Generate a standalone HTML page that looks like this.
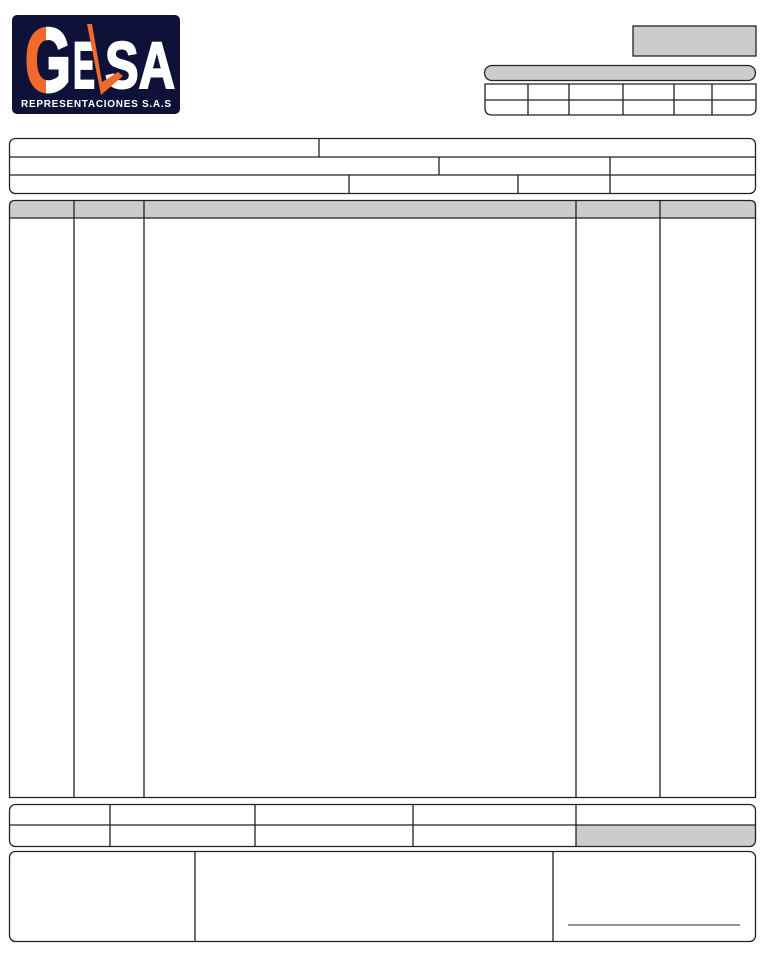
<!DOCTYPE html>
<html><head><meta charset="utf-8"><style>
html,body{margin:0;padding:0;background:#fff;}
svg{display:block;}
</style></head><body>
<svg width="770" height="970" viewBox="0 0 770 970" xmlns="http://www.w3.org/2000/svg">
<defs>
<clipPath id="gl"><rect x="20" y="20" width="26" height="80"/></clipPath>
<clipPath id="gr"><rect x="46" y="20" width="40" height="80"/></clipPath>
</defs>
<!-- logo -->
<rect x="12" y="15" width="168" height="99" rx="5" fill="#0f1238"/>
<g font-family="Liberation Sans, sans-serif" font-weight="bold">
<text x="25" y="91" font-size="90" textLength="46" lengthAdjust="spacingAndGlyphs" fill="#ef6a2c" stroke="#ef6a2c" stroke-width="3" clip-path="url(#gl)">G</text>
<text x="25" y="91" font-size="90" textLength="46" lengthAdjust="spacingAndGlyphs" fill="#fff" stroke="#fff" stroke-width="3" clip-path="url(#gr)">G</text>
<text x="73" y="88" font-size="66" textLength="22" lengthAdjust="spacingAndGlyphs" fill="#fff" stroke="#fff" stroke-width="2">E</text>
<text x="105" y="88" font-size="66" textLength="70" lengthAdjust="spacingAndGlyphs" fill="#fff" stroke="#fff" stroke-width="2">SA</text>
<path d="M87 24 L92 24 L102 82 L118 72 L123 76 L101 95 Z" fill="#ef6a2c"/>
<text x="21" y="107" font-size="10" textLength="150" lengthAdjust="spacing" fill="#fff">REPRESENTACIONES S.A.S</text>
</g>
<g fill="none" stroke="#222" stroke-width="1.3">
<!-- top right -->
<rect x="633" y="26" width="123" height="30" fill="#cccccc"/>
<rect x="484.5" y="65.5" width="271" height="15" rx="7.5" fill="#cccccc"/>
<path d="M485 84 H756 V108 Q756 115 749 115 H492 Q485 115 485 108 Z"/>
<path d="M485 100 H756 M528 84 V115 M569 84 V115 M623 84 V115 M674 84 V115 M712 84 V115"/>
<!-- form -->
<rect x="9.5" y="138.5" width="746" height="55" rx="6"/>
<path d="M10 157 H756 M10 175 H756 M319 138 V157 M439 157 V175 M610 157 V193 M349 175 V193 M518 175 V193"/>
<!-- items -->
<path d="M9.5 218 V797.5 H755.5 V218" />
<path d="M9.5 218 V206 Q9.5 200.5 15 200.5 H750 Q755.5 200.5 755.5 206 V218 Z" fill="#cccccc"/>
<path d="M74 200 V797 M144 200 V797 M576 200 V797 M660 200 V797"/>
<!-- totals -->
<path d="M576 825 H755.5 V839 Q755.5 846 749 846 H576 Z" fill="#cccccc" stroke="none"/>
<rect x="9.5" y="804.5" width="746" height="42" rx="6"/>
<path d="M10 825 H756 M110 804 V846 M255 804 V846 M413 804 V846 M576 804 V846"/>
<!-- footer -->
<rect x="9.5" y="851.5" width="746" height="90" rx="6"/>
<path d="M195 851 V941 M553 851 V941"/>
<path d="M568 925 H740" stroke="#555"/>
</g>
</svg>
</body></html>
